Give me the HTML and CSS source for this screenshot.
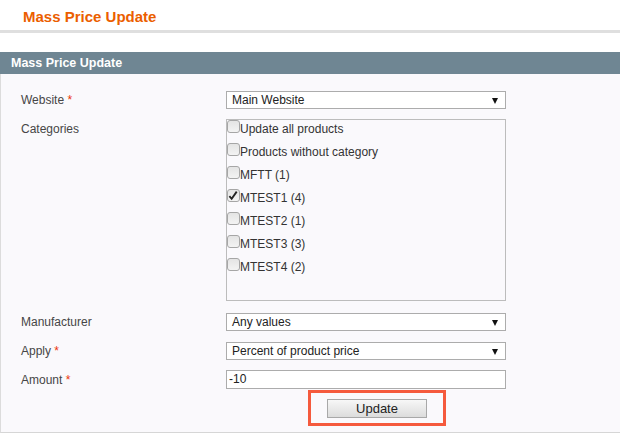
FILE: index.html
```html
<!DOCTYPE html>
<html>
<head>
<meta charset="utf-8">
<link rel="stylesheet" href="styles.css">
</head>
<body>
<div class="page-head"><h3 class="page-title">Mass Price Update</h3></div>
<div class="fieldset">
  <div class="legend">Mass Price Update</div>
  <div class="fs-body">
    <div class="row">
      <div class="label">Website <span class="req">*</span></div>
      <div class="field"><div class="select"><span class="sel-text">Main Website</span><span class="arrow"></span></div></div>
    </div>
    <div class="row row-top gap10">
      <div class="label label-top">Categories</div>
      <div class="field">
        <div class="cat-box">
          <div class="cat"><span class="cb"></span><span class="cat-text">Update all products</span></div>
          <div class="cat"><span class="cb"></span><span class="cat-text">Products without category</span></div>
          <div class="cat"><span class="cb"></span><span class="cat-text">MFTT (1)</span></div>
          <div class="cat"><span class="cb checked"><svg width="12" height="12" viewBox="0 0 12 12"><path d="M1.5 6.2 L4 9 L9.5 1.2" fill="none" stroke="#222" stroke-width="2"/></svg></span><span class="cat-text">MTEST1 (4)</span></div>
          <div class="cat"><span class="cb"></span><span class="cat-text">MTEST2 (1)</span></div>
          <div class="cat"><span class="cb"></span><span class="cat-text">MTEST3 (3)</span></div>
          <div class="cat"><span class="cb"></span><span class="cat-text">MTEST4 (2)</span></div>
        </div>
      </div>
    </div>
    <div class="row gap12">
      <div class="label">Manufacturer</div>
      <div class="field"><div class="select"><span class="sel-text">Any values</span><span class="arrow"></span></div></div>
    </div>
    <div class="row gap11">
      <div class="label">Apply <span class="req">*</span></div>
      <div class="field"><div class="select"><span class="sel-text">Percent of product price</span><span class="arrow"></span></div></div>
    </div>
    <div class="row gap10">
      <div class="label">Amount <span class="req">*</span></div>
      <div class="field"><div class="input">-10</div></div>
    </div>
    <div class="row gap2">
      <div class="label"></div>
      <div class="field">
        <div class="highlight"><div class="button">Update</div></div>
      </div>
    </div>
  </div>
</div>
</body>
</html>
```
FILE: styles.css
```css
html, body {
  margin: 0;
  padding: 0;
  background: #ffffff;
  font-family: "Liberation Sans", Arial, sans-serif;
}
.page-head {
  height: 30px;
  border-bottom: 3px solid #dfdfdf;
  padding-left: 23px;
}
.page-title {
  margin: 0;
  padding-top: 4px;
  line-height: 26px;
  font-size: 15px;
  font-weight: bold;
  color: #eb5e00;
}
.fieldset {
  margin-top: 19px;
}
.legend {
  height: 22px;
  line-height: 22px;
  background: #6f8693;
  color: #ffffff;
  font-size: 12.5px;
  font-weight: bold;
  padding-left: 11px;
}
.fs-body {
  background: #faf9fc;
  border-left: 1px solid #dcdcdc;
  border-bottom: 1px solid #d6d6d6;
  padding: 17px 0 6px 20px;
}
.row {
  display: flex;
  align-items: center;
}
.row-top { align-items: flex-start; }
.gap2 { margin-top: 1px; }
.gap10 { margin-top: 10px; }
.gap11 { margin-top: 11px; }
.gap12 { margin-top: 12px; }
.label {
  width: 205px;
  font-size: 12px;
  color: #464646;
  line-height: 14px;
}
.label-top { padding-top: 3px; }
.req { color: #eb340a; }
.field { width: 280px; }
.select {
  height: 16px;
  border: 1px solid #acacac;
  background: #ffffff;
  display: flex;
  align-items: center;
  justify-content: space-between;
  padding: 0 7px 0 5px;
  font-size: 12px;
  color: #222222;
}
.arrow {
  width: 0;
  height: 0;
  border-left: 3.5px solid transparent;
  border-right: 3.5px solid transparent;
  border-top: 6px solid #111111;
  margin-top: 1px;
}
.cat-box {
  height: 180px;
  border: 1px solid #bcbcbc;
  background: #faf9fc;
}
.cat {
  height: 23px;
  display: flex;
  align-items: flex-start;
}
.cb {
  width: 11px;
  height: 11px;
  border: 1px solid #a6a6a6;
  border-radius: 3px;
  background: linear-gradient(#e4e4e4, #f3f3f3);
  display: flex;
}
.cb svg { display: block; }
.cat-text {
  font-size: 12px;
  line-height: 14px;
  padding-top: 2px;
  color: #333333;
}
.input {
  height: 17px;
  border: 1px solid #acacac;
  background: #ffffff;
  padding-left: 2px;
  font-size: 12px;
  line-height: 17px;
  color: #222222;
}
.highlight {
  margin-left: 82px;
  width: 116px;
  height: 24px;
  border: 3px solid #f55a3d;
  padding: 6px 0 0 16px;
}
.button {
  width: 98px;
  height: 17px;
  border: 1px solid #a8a8a8;
  background: linear-gradient(#f7f7f7, #dcdcdc);
  font-size: 13px;
  line-height: 17px;
  text-align: center;
  color: #222222;
}
```
